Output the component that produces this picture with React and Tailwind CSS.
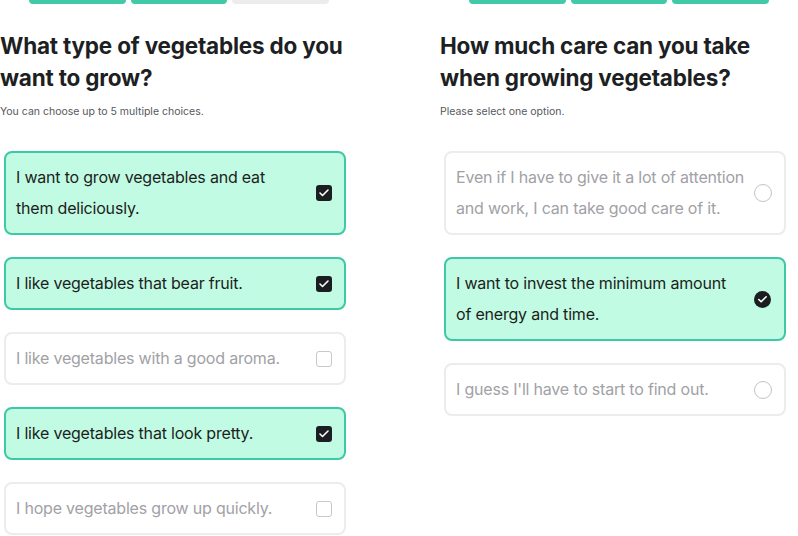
import { Check } from 'lucide-react';

const LEFT_OPTIONS = [
  { text: 'I want to grow vegetables and eat them deliciously.', on: true },
  { text: 'I like vegetables that bear fruit.', on: true },
  { text: 'I like vegetables with a good aroma.', on: false },
  { text: 'I like vegetables that look pretty.', on: true },
  { text: 'I hope vegetables grow up quickly.', on: false },
];

const RIGHT_OPTIONS = [
  { text: 'Even if I have to give it a lot of attention\nand work, I can take good care of it.', on: false },
  { text: 'I want to invest the minimum amount\nof energy and time.', on: true },
  { text: "I guess I'll have to start to find out.", on: false },
];

function Progress({ done }) {
  return (
    <div className="ml-[29px] flex w-[300px] gap-[5px]">
      {[0, 1, 2].map(i => (
        <div
          key={i}
          className={`h-[4px] flex-1 rounded-b-full ${i < done ? 'bg-[#41c9a8]' : 'bg-[#ececec]'}`}
        />
      ))}
    </div>
  );
}

function CheckBox({ on }) {
  if (on) {
    return (
      <div className="flex h-[16px] w-[16px] shrink-0 items-center justify-center rounded-[3px] bg-[#1b1e21]">
        <Check size={12} strokeWidth={3.2} className="text-white" />
      </div>
    );
  }
  return <div className="h-[16px] w-[16px] shrink-0 rounded-[3px] border-[1.5px] border-[#c8c8c8] bg-white" />;
}

function Radio({ on }) {
  if (on) {
    return (
      <div className="mr-[1px] flex h-[17px] w-[17px] shrink-0 items-center justify-center rounded-full bg-[#1b1e21]">
        <Check size={11} strokeWidth={3.5} className="text-white" />
      </div>
    );
  }
  return <div className="h-[18px] w-[18px] shrink-0 rounded-full border-[1.5px] border-[#c4c4c4] bg-white" />;
}

function Option({ text, on, radio }) {
  return (
    <div
      className={`flex items-center justify-between gap-2 rounded-[8px] border-2 py-[9px] pl-[10px] pr-[12px] ${
        on ? 'border-[#3fc8a6] bg-[#c2fbe3] text-[#1c1e21]' : 'border-[#ececec] bg-white text-[#a1a1a6]'
      }`}
    >
      <p className={`whitespace-pre-line text-[16px] leading-[31px] tracking-[-0.2px] ${radio ? 'max-w-[300px]' : 'max-w-[280px]'}`}>{text}</p>
      {radio ? <Radio on={on} /> : <CheckBox on={on} />}
    </div>
  );
}

function Panel({ done, title, hint, options, radio }) {
  return (
    <div className="w-[350px] shrink-0">
      <Progress done={done} />
      <h1 className="mt-[26px] text-[22.5px] font-bold leading-[32px] tracking-[-0.2px] text-[#1d1f23]">{title}</h1>
      <p className="mt-[10px] text-[10.5px] leading-[16px] text-[#55585d]">{hint}</p>
      <div className="mt-[31px] flex w-[342px] flex-col gap-[22px] pl-[4px] box-content">
        {options.map(o => (
          <Option key={o.text} text={o.text} on={o.on} radio={radio} />
        ))}
      </div>
    </div>
  );
}

export default function App() {
  return (
    <div className="flex h-[536px] w-[798px] gap-[90px] overflow-hidden bg-white font-['Inter',sans-serif]">
      <Panel
        done={2}
        title="What type of vegetables do you want to grow?"
        hint="You can choose up to 5 multiple choices."
        options={LEFT_OPTIONS}
      />
      <Panel
        done={3}
        title="How much care can you take when growing vegetables?"
        hint="Please select one option."
        options={RIGHT_OPTIONS}
        radio
      />
    </div>
  );
}
